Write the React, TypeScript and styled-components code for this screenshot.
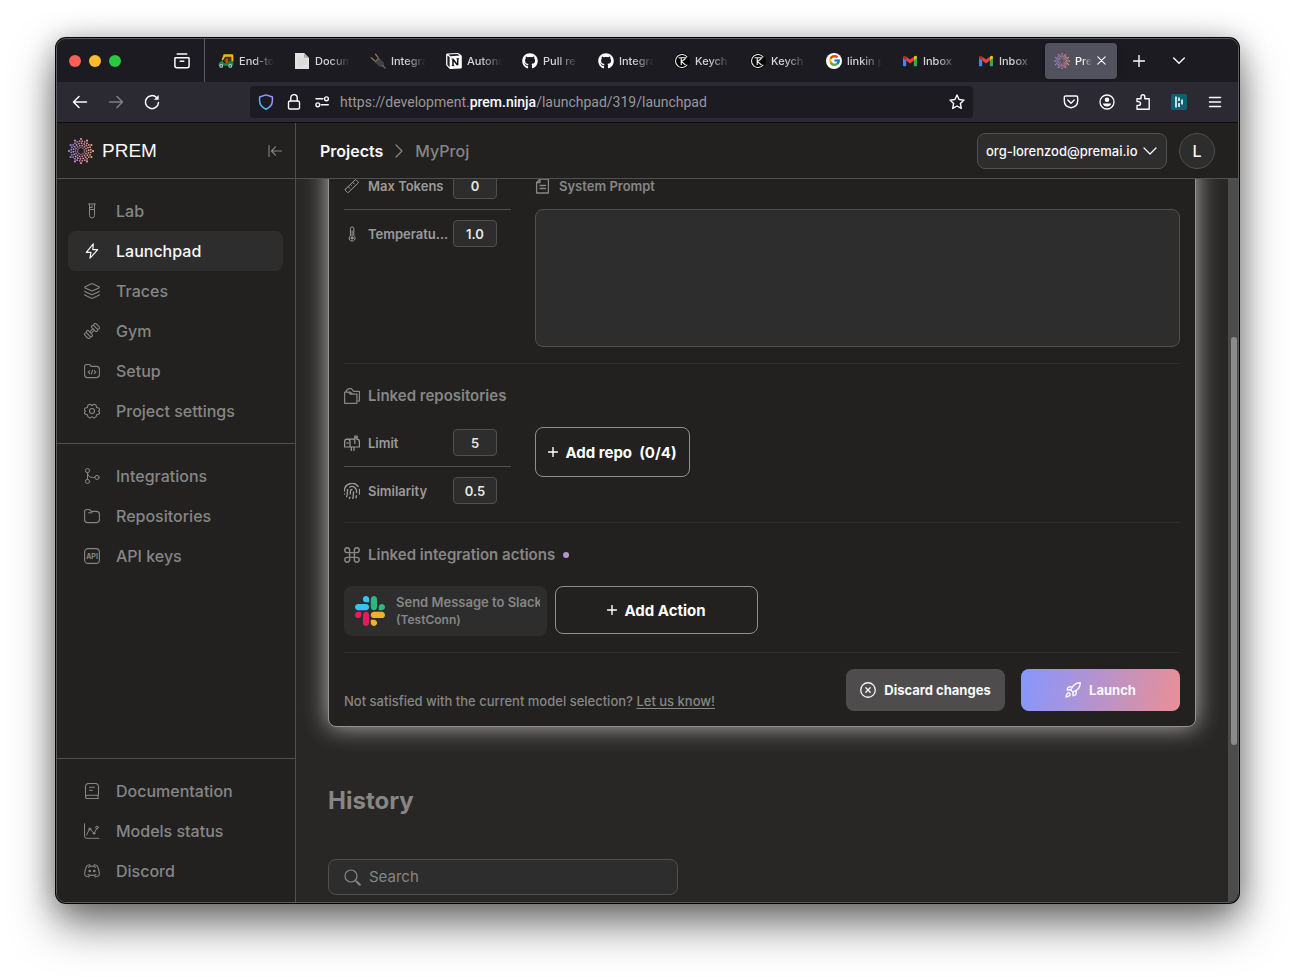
import React from "react";
import styled, { createGlobalStyle } from "styled-components";
import { Layers, Fingerprint, Command, CircleX, Rocket } from "lucide-react";
import { FcGoogle } from "react-icons/fc";
import { FaGithub } from "react-icons/fa";

const c = {
  panel: "#22211f",
  canvas: "#282725",
  field: "#2d2d2d",
  line: "#505050",
  faint: "#2f2e2c",
  muted: "#868686",
  soft: "#9a9a9a",
  white: "#f8f8f8",
};

const GlobalStyle = createGlobalStyle`
  *, *::before, *::after { box-sizing: border-box; }
  body { margin: 0; background: #fff; font-family: Inter, "Liberation Sans", sans-serif; color: ${c.muted}; }
  button, input, select, textarea { font: inherit; color: inherit; margin: 0; }
  button { cursor: pointer; border: 0; background: none; padding: 0; }
  h2, p { margin: 0; }
  svg { display: block; flex: none; }
`;

/* ---------- window ---------- */

const Desktop = styled.div`
  height: 100vh;
  min-height: 700px;
  padding: 38px 56px 74px;
  display: flex;
  overflow: hidden;
`;

const Window = styled.div`
  flex: 1;
  min-width: 0;
  display: flex;
  flex-direction: column;
  border: 1px solid #5c5c5e;
  border-radius: 10px;
  overflow: hidden;
  background: ${c.panel};
  box-shadow: 0 0 0 1px #050505, 0 22px 44px rgba(0, 0, 0, 0.52), 0 2px 28px rgba(0, 0, 0, 0.28);
`;

const TabBar = styled.div`
  flex: none;
  height: 43px;
  display: flex;
  align-items: center;
  background: #1c1b22;
  color: #fbfbfe;
`;

const Lights = styled.div`
  display: flex;
  gap: 8px;
  padding-left: 12px;
  width: 107px;
`;

const Light = styled.button<{ $color: string }>`
  width: 12px;
  height: 12px;
  border-radius: 50%;
  background: ${(p) => p.$color};
`;

const ChromeButton = styled.button<{ $dim?: boolean }>`
  width: 36px;
  height: 36px;
  flex: none;
  display: grid;
  place-items: center;
  opacity: ${(p) => (p.$dim ? 0.4 : 1)};
`;

const TabDivider = styled.span`
  align-self: stretch;
  width: 1px;
  margin-left: 4px;
  background: #5b5a62;
`;

const Tabs = styled.div`
  display: flex;
  gap: 4px;
  padding: 0 4px;
`;

const TabTools = styled.div`
  display: flex;
  gap: 4px;
`;

const Tab = styled.button<{ $active?: boolean }>`
  width: 72px;
  height: 36px;
  display: flex;
  align-items: center;
  gap: 5px;
  padding: 0 ${(p) => (p.$active ? 11 : 7)}px 0 9px;
  border-radius: 4px;
  background: ${(p) => (p.$active ? "#52525e" : "transparent")};
  box-shadow: ${(p) => (p.$active ? "0 0 4px rgba(0, 0, 0, 0.4)" : "none")};
  font-size: 11px;
  line-height: 16px;
  font-weight: 500;
  color: ${(p) => (p.$active ? "#fbfbfe" : "#d6d5da")};
`;

const TabTitle = styled.span`
  flex: 1;
  min-width: 0;
  overflow: hidden;
  white-space: nowrap;
  text-align: left;
  mask-image: linear-gradient(to right, #000 40%, transparent);
`;

const Toolbar = styled.div`
  flex: none;
  height: 41px;
  display: flex;
  align-items: center;
  padding: 0 5px;
  background: #2b2a33;
  border-bottom: 1px solid #0c0c0d;
  color: #fbfbfe;
`;

const Spring = styled.span`
  flex: 0 1 80px;
`;

const AddressBar = styled.div`
  flex: 1 0 0;
  min-width: 0;
  height: 32px;
  display: flex;
  align-items: center;
  gap: 12px;
  padding: 0 8px;
  border-radius: 4px;
  background: #1c1b22;
`;

const Url = styled.span`
  flex: 1;
  min-width: 0;
  overflow: hidden;
  white-space: nowrap;
  margin-left: -2px;
  font-family: Roboto, "Liberation Sans", sans-serif;
  font-size: 14px;
  line-height: 20px;
  color: #98979d;
  b { font-weight: 500; color: #fbfbfe; }
`;

/* ---------- app shell ---------- */

const AppBody = styled.div`
  flex: 1;
  min-height: 0;
  display: flex;
`;

const Sidebar = styled.aside`
  flex: none;
  width: 239px;
  display: flex;
  flex-direction: column;
  border-right: 1px solid ${c.line};
  background: ${c.panel};
`;

const Brand = styled.div`
  height: 56px;
  display: flex;
  align-items: center;
  gap: 8px;
  padding: 0 12px 0 11px;
  border-bottom: 1px solid ${c.line};
`;

const BrandName = styled.span`
  flex: 1;
  font-family: "Liberation Sans", Arial, sans-serif;
  font-size: 19px;
  line-height: 24px;
  color: ${c.white};
`;

const Nav = styled.nav<{ $bottom?: boolean }>`
  padding: 12px 12px ${(p) => (p.$bottom ? 11 : 12)}px 11px;
  & + & { border-top: 1px solid ${c.line}; }
  margin-top: ${(p) => (p.$bottom ? "auto" : "0")};
`;

const NavLink = styled.a<{ $active?: boolean }>`
  height: 40px;
  display: flex;
  align-items: center;
  gap: 16px;
  padding: 0 16px;
  border-radius: 8px;
  font-size: 16px;
  line-height: 24px;
  font-weight: 500;
  text-decoration: none;
  color: ${(p) => (p.$active ? c.white : c.muted)};
  background: ${(p) => (p.$active ? c.field : "transparent")};
`;

const Main = styled.main`
  flex: 1;
  min-width: 0;
  display: flex;
  flex-direction: column;
  background: ${c.canvas};
`;

const TopBar = styled.header`
  flex: none;
  height: 56px;
  display: flex;
  align-items: center;
  gap: 12px;
  padding: 0 23px 0 24px;
  border-bottom: 1px solid ${c.line};
  background: ${c.panel};
`;

const Crumbs = styled.div`
  flex: 1;
  display: flex;
  align-items: center;
  gap: 9px;
  font-size: 16px;
  line-height: 24px;
  font-weight: 500;
  a { color: ${c.white}; text-decoration: none; font-weight: 600; }
`;

const OrgPicker = styled.label`
  width: 190px;
  height: 36px;
  display: flex;
  align-items: center;
  padding: 0 9px 0 8px;
  border: 1px solid ${c.line};
  border-radius: 8px;
  background: ${c.field};
  color: ${c.white};
`;

const OrgSelect = styled.select`
  flex: 1;
  min-width: 0;
  appearance: none;
  border: 0;
  padding: 0;
  background: none;
  font-size: 13px;
  line-height: 20px;
  font-weight: 500;
`;

const Avatar = styled.button`
  width: 36px;
  height: 36px;
  border: 1px solid ${c.line};
  border-radius: 50%;
  background: ${c.field};
  color: ${c.white};
  font-size: 16px;
  font-weight: 500;
`;

const Viewport = styled.div`
  flex: 1;
  min-height: 0;
  display: flex;
  overflow: hidden;
`;

const Page = styled.div`
  flex: 1;
  min-width: 0;
  padding: 0 32px;
`;

const ScrollTrack = styled.div`
  flex: none;
  width: 10px;
  padding: 158px 1px 0 3px;
  background: #4c4c4c;
`;

const ScrollThumb = styled.div`
  height: 408px;
  border-radius: 3px;
  background: #8b8b8b;
`;

/* ---------- launch card ---------- */

const Card = styled.form`
  margin-top: -33px;
  padding: 15px;
  border: 1px solid #939393;
  border-radius: 8px;
  background: ${c.panel};
  box-shadow: 0 0 24px rgba(255, 255, 255, 0.65);
`;

const Section = styled.section<{ $end: number }>`
  padding-bottom: ${(p) => p.$end}px;
  border-bottom: 1px solid ${c.faint};
`;

const SectionTitle = styled.h2<{ $gap: number }>`
  display: flex;
  align-items: center;
  gap: 8px;
  padding: 20px 0 ${(p) => p.$gap}px;
  font-size: 15px;
  line-height: 24px;
  font-weight: 600;
`;

const Columns = styled.div`
  display: grid;
  grid-template-columns: 167px minmax(0, 1fr);
  column-gap: 24px;
  align-items: start;
`;

const ParamRow = styled.label`
  display: flex;
  align-items: center;
  gap: 4px;
  padding: 10px 14px 10px 0;
  font-size: 13px;
  line-height: 20px;
  font-weight: 600;
  color: ${c.soft};
  & + & { border-top: 1px solid ${c.line}; }
`;

const ParamName = styled.span`
  flex: 1;
  min-width: 0;
  padding-left: 4px;
  white-space: nowrap;
`;

const ParamInput = styled.input`
  width: 44px;
  height: 27px;
  padding: 0;
  border: 1px solid ${c.line};
  border-radius: 4px;
  background: ${c.field};
  color: #e6e6e6;
  text-align: center;
  font-size: 13px;
  font-weight: 600;
`;

const PromptLabel = styled.label`
  height: 47px;
  display: flex;
  align-items: center;
  gap: 8px;
  font-size: 13px;
  font-weight: 600;
`;

const PromptArea = styled.textarea`
  display: block;
  width: 100%;
  height: 138px;
  resize: none;
  border: 1px solid ${c.line};
  border-radius: 8px;
  background: ${c.field};
`;

const OutlineButton = styled.button<{ $wide?: boolean }>`
  display: flex;
  align-items: center;
  justify-content: center;
  gap: 7px;
  width: ${(p) => (p.$wide ? 203 : 155)}px;
  height: ${(p) => (p.$wide ? 48 : 50)}px;
  margin-top: ${(p) => (p.$wide ? 0 : 8)}px;
  border: 1px solid #8f8f8f;
  border-radius: 8px;
  color: #fff;
  font-size: 15px;
  font-weight: 700;
  white-space: pre;
`;

const Actions = styled.div`
  display: flex;
  gap: 8px;
`;

const ActionCard = styled.div`
  width: 203px;
  height: 50px;
  display: flex;
  align-items: center;
  gap: 11px;
  padding: 0 7px 0 11px;
  border-radius: 8px;
  background: ${c.field};
`;

const ActionText = styled.div`
  min-width: 0;
  overflow: hidden;
  white-space: nowrap;
  font-size: 13px;
  line-height: 18px;
  font-weight: 600;
  small { display: block; font-size: 12px; }
`;

const Dot = styled.span`
  width: 6px;
  height: 6px;
  border-radius: 50%;
  background: linear-gradient(to right, #8795ff, #e88fa0);
`;

const CardFooter = styled.div`
  display: flex;
  align-items: flex-end;
  gap: 16px;
  padding-top: 16px;
`;

const Note = styled.p`
  flex: 1;
  font-size: 13px;
  line-height: 20px;
  font-weight: 500;
  a { color: inherit; text-underline-offset: 2px; }
`;

const FooterButton = styled.button<{ $primary?: boolean }>`
  width: 159px;
  height: 42px;
  display: flex;
  align-items: center;
  justify-content: center;
  gap: 8px;
  border-radius: 8px;
  background: ${(p) => (p.$primary ? "linear-gradient(100deg, #8696ff, #ea8f96)" : "#4e4c4d")};
  color: ${c.white};
  font-size: 13px;
  font-weight: 700;
`;

const HistoryTitle = styled.h2`
  margin: 58px 0 42px;
  font-size: 24px;
  line-height: 32px;
  font-weight: 700;
`;

const SearchBox = styled.label`
  width: 350px;
  height: 36px;
  display: flex;
  align-items: center;
  gap: 8px;
  padding: 0 15px;
  border: 1px solid ${c.line};
  border-radius: 8px;
  background: ${c.field};
`;

const SearchInput = styled.input`
  flex: 1;
  min-width: 0;
  border: 0;
  padding: 0;
  background: none;
  font-size: 15px;
  line-height: 20px;
  &::placeholder { color: ${c.muted}; opacity: 1; }
`;

/* ---------- drawings ---------- */

type IconProps = { size?: number; box?: number; w?: number; children: React.ReactNode };

const Icon = ({ size = 16, box = 16, w = 1, children }: IconProps) => (
  <svg
    width={size}
    height={size}
    viewBox={`0 0 ${box} ${box}`}
    fill="none"
    stroke="currentColor"
    strokeWidth={w}
    strokeLinecap="round"
    strokeLinejoin="round"
    aria-hidden
  >
    {children}
  </svg>
);

const mix = (t: number) => {
  const stops = [[136, 140, 235], [214, 130, 170], [246, 165, 130]];
  const k = t < 0.5 ? 0 : 1;
  const f = t < 0.5 ? t * 2 : t * 2 - 1;
  return `rgb(${stops[k].map((v, i) => Math.round(v + (stops[k + 1][i] - v) * f)).join(",")})`;
};

const PremMark = ({ size }: { size: number }) => {
  const rings = [
    { r: 3.4, n: 10, d: 0.7, turn: 0 },
    { r: 5.5, n: 14, d: 0.85, turn: 0.5 },
    { r: 7.7, n: 18, d: 0.95, turn: 0.2 },
    { r: 9.9, n: 24, d: 0.9, turn: 0.5 },
    { r: 12, n: 12, d: 1.1, turn: 0 },
  ];
  return (
    <svg width={size} height={size} viewBox="0 0 26 26" aria-hidden>
      {rings.map((ring, ri) =>
        Array.from({ length: ring.n }, (_, i) => {
          const a = ((i + ring.turn) / ring.n) * Math.PI * 2 - Math.PI / 2;
          const x = 13 + ring.r * Math.cos(a);
          const y = 13 + ring.r * Math.sin(a);
          return <circle key={`${ri}-${i}`} cx={x} cy={y} r={ring.d} fill={mix(x / 26)} />;
        })
      )}
    </svg>
  );
};

const Rickshaw = () => (
  <svg width="16" height="16" viewBox="0 0 17 16" aria-hidden>
    <path d="M6 .8h9q1.300 0 1.300 1.300V8.500H14V4H7.500L5.200 7.500 3.800 7z" fill="#f2b90f" />
    <path d="M7.500 3.500H14V9H6.800L6 7z" fill="#4a2f1c" />
    <path d="M4.500 7.500 1 10 .5 13H16.300V8.500H11V10.500H6.500z" fill="#119048" />
    <path d="M8 5.500h2.600v5H8z" fill="#b8561e" />
    <circle cx="3.400" cy="13.200" r="2" fill="#c9cdd1" />
    <circle cx="13" cy="13.200" r="2" fill="#c9cdd1" />
    <circle cx="3.400" cy="13.200" r=".9" fill="#333" />
    <circle cx="13" cy="13.200" r=".9" fill="#333" />
  </svg>
);

const PageFavicon = () => (
  <svg width="16" height="16" viewBox="0 0 16 16" aria-hidden>
    <path d="M1 0h9l5 5v11H1z" fill="#e2e2e2" />
    <path d="M10 0v5h5z" fill="#b4b4b4" />
    <path d="M3.500 7h9M3.500 9h9M3.500 11h9M3.500 13h6M3.500 5h5" stroke="#cfcfcf" strokeWidth=".7" />
  </svg>
);

const PlugFavicon = () => (
  <svg width="16" height="16" viewBox="0 0 16 16" aria-hidden>
    <path d="M.8 4.400 5 8M5.200.8 8.500 5" stroke="#a8823a" strokeWidth="1.200" />
    <path d="M4 8.500 8.500 4.200 14 9.500q.5 3-1 4-2 1-4-.3z" fill="#414145" />
    <path d="m5 9 4-4M12 12l3.500 3.500" stroke="#66666b" strokeWidth="1.200" />
  </svg>
);

const NotionFavicon = () => (
  <svg width="16" height="16" viewBox="0 0 16 16" aria-hidden>
    <path d="M1.500.5 11.500 0Q12.300 0 13 .6l2.300 1.600q.5.400.5 1.200v11q0 .9-1 1l-10.300.6q-.9 0-1.400-.7L.5 12.500q-.4-.5-.4-1.200V1.800Q.1.600 1.500.5z" fill="#fff" />
    <path d="M1.400 2.400 3.600 4v10.300L1.400 11.700zM2.300 1.500 11.500 1l2.200 1.600L4.700 3.200z" fill="#1c1b22" />
    <path d="M7 6.200V12.500M7 6.200l4.600 6M11.700 5.800v6.500" stroke="#111" strokeWidth="1.500" fill="none" />
    <path d="M5.500 6h2M5.700 12.600h2.600M10.500 5.700h2.600" stroke="#111" strokeWidth=".9" fill="none" />
  </svg>
);

const KeychainFavicon = () => (
  <svg width="16" height="16" viewBox="0 0 16 16" aria-hidden>
    <circle cx="8" cy="8" r="7.900" fill="#060606" />
    <path d="M13.300 4.200A6.500 6.500 0 1 0 13.300 11.800" stroke="#eee" strokeWidth="1.100" fill="none" />
    <path d="M4.500 4.800h8M7.200 4.800V12M11.500 5.500 7.500 8.600 11.500 12" stroke="#eee" strokeWidth="1.100" fill="none" />
  </svg>
);

const GoogleBadge = styled.span`
  width: 16px;
  height: 16px;
  flex: none;
  display: grid;
  place-items: center;
  border-radius: 50%;
  background: #fff;
`;

const GmailFavicon = () => (
  <svg width="16" height="16" viewBox="0 0 16 16" aria-hidden>
    <path d="M1 4v8.500q0 .8.900.8H4.200V6.500z" fill="#4285f4" />
    <path d="M15 4v8.500q0 .8-.9.800H11.800V6.500z" fill="#34a853" />
    <path d="M11.800 3.700 13 2.900q2-.8 2 1.300v.9l-3.200 2.500z" fill="#fbbc04" />
    <path d="M4.200 3.700 3 2.900Q1 2.100 1 4.200v.9l3.200 2.500z" fill="#c5221f" />
    <path d="M4.200 3.700 8 6.600l3.800-2.900v3.900L8 10.500 4.200 7.600z" fill="#ea4335" />
  </svg>
);

const SlackLogo = () => (
  <svg width="30" height="30" viewBox="0 0 122.800 122.800" aria-hidden>
    <path d="M25.800 77.600c0 7.100-5.800 12.900-12.900 12.900S0 84.700 0 77.600s5.800-12.900 12.900-12.900h12.900v12.900zm6.500 0c0-7.100 5.800-12.900 12.900-12.900s12.900 5.800 12.900 12.900v32.300c0 7.100-5.800 12.900-12.900 12.900s-12.900-5.800-12.900-12.900V77.600z" fill="#E01E5A" />
    <path d="M45.200 25.800c-7.100 0-12.900-5.800-12.900-12.900S38.100 0 45.200 0s12.900 5.800 12.900 12.900v12.900H45.200zm0 6.500c7.100 0 12.900 5.800 12.900 12.900s-5.800 12.900-12.900 12.900H12.900C5.800 58.100 0 52.300 0 45.200s5.800-12.900 12.900-12.900h32.300z" fill="#36C5F0" />
    <path d="M97 45.200c0-7.100 5.800-12.900 12.900-12.900s12.900 5.800 12.900 12.900-5.800 12.900-12.900 12.900H97V45.200zm-6.500 0c0 7.100-5.800 12.900-12.900 12.900s-12.900-5.800-12.900-12.900V12.900C64.700 5.800 70.500 0 77.600 0s12.900 5.800 12.900 12.900v32.300z" fill="#2EB67D" />
    <path d="M77.600 97c7.100 0 12.900 5.800 12.900 12.900s-5.800 12.900-12.900 12.900-12.900-5.800-12.900-12.900V97h12.900zm0-6.500c-7.100 0-12.900-5.800-12.900-12.900s5.800-12.900 12.900-12.900h32.300c7.100 0 12.900 5.800 12.900 12.900s-5.800 12.900-12.900 12.900H77.600z" fill="#ECB22E" />
  </svg>
);

const TubeIcon = () => (
  <Icon>
    <path d="M4.500 1h7M5.500 1v11.500a2.500 2.500 0 0 0 5 0V1M5.500 6.500h5M8 2.500v2M5.500 4.500H8" />
  </Icon>
);

const BoltIcon = () => (
  <Icon w={1.2}>
    <path d="M9.300.9 2.300 9.300h4.600L6 15.200l7.700-8.500H8.800z" />
  </Icon>
);

const BarbellIcon = () => (
  <Icon w={1.1}>
    <path d="m5.900 8.700 2.800-2.800M7.300 10.100l2.800-2.800" />
    <path d="M2.700 7.900q1.100-1 2 0l3.400 3.400q1 .9 0 2-1 .9-2 0L2.700 9.900q-.9-1 0-2z" />
    <path d="M2.400 9.800q-1.900-.2-1.900 1.500 0 .9 1 1.600l1.600 1.600q.7 1 1.600 1 1.700 0 1.500-1.900" />
    <path d="M7.900 2.700q-1 1 0 2l3.400 3.400q1 .9 2 0 .9-1 0-2L9.900 2.700q-1-.9-2 0z" />
    <path d="M9.800 2.400Q9.600.5 11.300.5q.9 0 1.600 1l1.600 1.600q1 .7 1 1.600 0 1.700-1.900 1.500" />
  </Icon>
);

const FolderPath = () => (
  <path d="M.6 11.800V3.600Q.6 1.500 2.700 1.500h2.200q1 0 1.600.9l.7 1h5.200q3 0 3 3v5.200q0 3-3 3H3.600q-3 0-3-2.800z" />
);

const FolderIcon = () => (
  <Icon w={1.1}>
    <FolderPath />
    <path d="M4.500 4.800h3.500" />
  </Icon>
);

const FolderCodeIcon = () => (
  <Icon w={1.1}>
    <FolderPath />
    <path d="M5.700 7.600 4.200 9.100l1.500 1.500M10.300 7.600l1.500 1.500-1.500 1.500M8.600 7.200l-1.200 3.800" />
  </Icon>
);

const GearIcon = () => (
  <Icon w={1.1}>
    <circle cx="8" cy="8" r="2.500" />
    <path d="M5.800 1.200q1 .1 1.300.8.900.8 1.800 0 .3-.7 1.300-.8 1.800.5 2.200 1.800-.2 1.800 1.400 1.800 1.400.2 1.700 1.200.3 1-.5 1.500-1 .6 0 1.200.8.500.5 1.500-.3 1-1.700 1.200-1.600 0-1.400 1.800-.4 1.300-2.200 1.800-1-.1-1.300-.8-.9-.8-1.800 0-.3.700-1.300.8-1.800-.5-2.200-1.800.2-1.800-1.400-1.800Q.8 11.200.5 10.200.2 9.200 1 8.700q1-.6 0-1.200Q.2 7 .5 6 .8 5 2.200 4.800 3.800 4.800 3.600 3 4 1.700 5.800 1.200z" />
  </Icon>
);

const BranchIcon = () => (
  <Icon>
    <circle cx="3.500" cy="2.600" r="2.100" />
    <circle cx="3.500" cy="13.400" r="2.100" />
    <circle cx="13" cy="9.400" r="2.100" />
    <path d="M3.500 4.700v6.600M3.500 5q.5 4.400 5 4.400h2.400" />
  </Icon>
);

const ApiIcon = () => (
  <Icon w={1.1}>
    <rect x=".6" y=".6" width="14.800" height="14.800" rx="3.500" />
    <text x="8" y="10.500" textAnchor="middle" fontSize="7" fontWeight="700" fill="currentColor" stroke="none">API</text>
  </Icon>
);

const BookIcon = () => (
  <Icon w={1.1}>
    <path d="M1.500 13.500V3.500a3 3 0 0 1 3-3h7a3 3 0 0 1 3 3v8.800H3.500a2 1.600 0 0 0 0 3.200h11M14 12.300v3.200M5.500 4.200h5M5.500 7.200h3" />
  </Icon>
);

const StatusIcon = () => (
  <Icon>
    <path d="M.5.800v12.500a2 2 0 0 0 2 2h12.500M2.500 12l3.300-6.500 4.200 5 2.900-5.200" />
    <circle cx="5.800" cy="6" r="1" />
    <circle cx="10" cy="10.300" r="1" />
    <circle cx="13" cy="4.500" r="1.300" />
  </Icon>
);

const DiscordIcon = () => (
  <Icon w={1.1}>
    <path d="M5.500 12.200 4.600 14Q2 13.600.8 12 .3 6.500 3 2.700 4.200 1.900 5.600 1.700l.8 1.500h3.200l.8-1.500q1.400.2 2.600 1Q15.700 6.500 15.200 12 14 13.600 11.400 14l-.9-1.800M4 11.500q4 1.800 8 0M4.500 4.200 6.400 3.200M11.500 4.200 9.600 3.200" />
    <circle cx="5.700" cy="8" r=".8" fill="currentColor" />
    <circle cx="10.300" cy="8" r=".8" fill="currentColor" />
  </Icon>
);

const RulerIcon = () => (
  <Icon>
    <path d="m1.300 11.300 9.900-9.400q.5-.5 1 0l2 2.100q.5.500 0 1l-9.900 9.400q-.5.500-1 0l-2-2.100q-.5-.5 0-1zM4.300 8.600l1.400 1.500M6.500 6.500 7.400 7.500M8.700 4.400l1.400 1.500" />
  </Icon>
);

const ThermometerIcon = () => (
  <Icon>
    <path d="M6.400 9.600V2.700a1.700 1.700 0 0 1 3.400 0v6.900a3 3 0 1 1-3.400 0z" />
    <path d="M8.100 5v5" />
    <circle cx="8.100" cy="12" r="1.100" fill="currentColor" />
  </Icon>
);

const PageIcon = () => (
  <Icon w={1.3}>
    <path d="M5 1h8.400v14H1.600V4.500zM5 1v3.500H1.600M5 7.500h5.500M5 10.500h5.500" />
  </Icon>
);

const FoldersIcon = () => (
  <Icon w={1.2}>
    <path d="M.6 15.300V4.200h3.600l1.900 2h6.800v9.100zM2.400 4.200V2.500L4.500.7h3l2.100 2.600h5.800v9.700h-2.500M4.500 4.200h2l2.200 2" />
  </Icon>
);

const MailboxIcon = () => (
  <Icon w={1.2}>
    <path d="M6 12H.6V6.900a2.700 2.700 0 0 1 5.400 0V12h9.400V6.900q0-2.700-2.600-2.700M3.400 4.200h6.300M10.800 8.500V1h2.400v1.800h-2.400M7.300 12.300V15.600M10 12.300V15.600M2.500 8h2" />
  </Icon>
);

const SearchIcon = () => (
  <Icon size={17} box={17} w={1.2}>
    <circle cx="7" cy="7" r="6" />
    <path d="m11.600 11.600.8.800" />
    <path d="m12.800 12.800 3 3" strokeWidth="2" />
  </Icon>
);

const PlusIcon = () => (
  <Icon size={10} box={10} w={1.4}>
    <path d="M5 .5v9M.5 5h9" />
  </Icon>
);

/* ---------- data ---------- */

const tabs: { icon: React.ReactNode; title: string }[] = [
  { icon: <Rickshaw />, title: "End-to" },
  { icon: <PageFavicon />, title: "Docum" },
  { icon: <PlugFavicon />, title: "Integra" },
  { icon: <NotionFavicon />, title: "Autono" },
  { icon: <FaGithub size={16} color="#fff" />, title: "Pull re" },
  { icon: <FaGithub size={16} color="#fff" />, title: "Integra" },
  { icon: <KeychainFavicon />, title: "Keych" },
  { icon: <KeychainFavicon />, title: "Keych" },
  { icon: <GoogleBadge><FcGoogle size={13} /></GoogleBadge>, title: "linkin p" },
  { icon: <GmailFavicon />, title: "Inbox" },
  { icon: <GmailFavicon />, title: "Inbox" },
];

const projectNav = [
  { icon: <TubeIcon />, label: "Lab" },
  { icon: <BoltIcon />, label: "Launchpad", active: true },
  { icon: <Layers size={16} strokeWidth={1.5} viewBox="1 1 22 22" />, label: "Traces" },
  { icon: <BarbellIcon />, label: "Gym" },
  { icon: <FolderCodeIcon />, label: "Setup" },
  { icon: <GearIcon />, label: "Project settings" },
];

const orgNav = [
  { icon: <BranchIcon />, label: "Integrations" },
  { icon: <FolderIcon />, label: "Repositories" },
  { icon: <ApiIcon />, label: "API keys" },
];

const helpNav = [
  { icon: <BookIcon />, label: "Documentation" },
  { icon: <StatusIcon />, label: "Models status" },
  { icon: <DiscordIcon />, label: "Discord" },
];

type NavItem = { icon: React.ReactNode; label: string; active?: boolean };

const NavList = ({ items, bottom }: { items: NavItem[]; bottom?: boolean }) => (
  <Nav $bottom={bottom}>
    {items.map((item) => (
      <NavLink key={item.label} href="#" $active={item.active}>
        {item.icon}
        {item.label}
      </NavLink>
    ))}
  </Nav>
);

const Param = ({ icon, name, value }: { icon: React.ReactNode; name: string; value: string }) => (
  <ParamRow>
    {icon}
    <ParamName>{name}</ParamName>
    <ParamInput defaultValue={value} />
  </ParamRow>
);

const BrowserChrome = () => (
  <>
    <TabBar>
      <Lights>
        <Light $color="#ff5f57" aria-label="Close" />
        <Light $color="#febc2e" aria-label="Minimise" />
        <Light $color="#28c840" aria-label="Zoom" />
      </Lights>
      <ChromeButton aria-label="Recent tabs">
        <Icon w={1.5}>
          <path d="M3.200 1h9.600M1.600 4.800h12.800q.7 0 .7.700v7.300q0 2-2 2H2.900q-2 0-2-2V5.500q0-.7.700-.7zM6.200 8.300h3.600" />
        </Icon>
      </ChromeButton>
      <TabDivider />
      <Tabs>
        {tabs.map((t, i) => (
          <Tab key={i}>
            {t.icon}
            <TabTitle>{t.title}</TabTitle>
          </Tab>
        ))}
        <Tab $active>
          <PremMark size={16} />
          <TabTitle>Prem</TabTitle>
          <Icon size={9} box={9} w={1.1}><path d="m.8.800 7.400 7.400M8.200.800.800 8.200" /></Icon>
        </Tab>
      </Tabs>
      <TabTools>
        <ChromeButton aria-label="New tab">
          <Icon size={12} box={12} w={1.4}><path d="M6 .5v11M.5 6h11" /></Icon>
        </ChromeButton>
        <ChromeButton aria-label="List all tabs">
          <Icon size={12} box={12} w={1.4}><path d="m.7 3 5.300 5.300L11.300 3" /></Icon>
        </ChromeButton>
      </TabTools>
    </TabBar>
    <Toolbar>
      <ChromeButton aria-label="Back">
        <Icon w={1.5}><path d="M14.500 8H1.500M7 2.500 1.500 8 7 13.500" /></Icon>
      </ChromeButton>
      <ChromeButton aria-label="Forward" $dim>
        <Icon w={1.5}><path d="M1.500 8h13M9 2.500 14.500 8 9 13.500" /></Icon>
      </ChromeButton>
      <ChromeButton aria-label="Reload">
        <Icon w={1.5}>
          <path d="M14.500 8.500A6.500 6.500 0 1 1 12.600 3.500" />
          <path d="M14.700 1v4.800H9.900z" fill="currentColor" stroke="none" />
        </Icon>
      </ChromeButton>
      <Spring />
      <AddressBar>
        <svg width="16" height="16" viewBox="0 0 16 16" fill="none" aria-hidden>
          <defs>
            <linearGradient id="shield" x1="0" y1="1" x2="1" y2="0">
              <stop offset="0" stopColor="#30c5f0" />
              <stop offset=".5" stopColor="#6fa9f7" />
              <stop offset="1" stopColor="#b38bfa" />
            </linearGradient>
          </defs>
          <path d="M8 .9 14.400 3v3.500q0 6-6.400 8.700Q1.600 12.500 1.600 6.500V3z" stroke="url(#shield)" strokeWidth="1.500" strokeLinejoin="round" />
        </svg>
        <Icon w={1.4}>
          <rect x="2.500" y="7" width="11" height="8" rx="1.500" />
          <path d="M4.800 7V3.800a3.200 3.200 0 0 1 6.400 0V7" />
        </Icon>
        <Icon w={1.4}>
          <circle cx="12.500" cy="4.800" r="1.900" />
          <circle cx="3.800" cy="10.800" r="1.900" />
          <path d="M2 4.800h7M7.300 10.800h7" />
        </Icon>
        <Url>https://development.<b>prem.ninja</b>/launchpad/319/launchpad</Url>
        <Icon w={1.4}>
          <path d="m8 1 2.100 4.500 4.900.6-3.600 3.400.9 4.900L8 12l-4.300 2.400.9-4.900L1 6.100l4.900-.6z" />
        </Icon>
      </AddressBar>
      <Spring />
      <ChromeButton aria-label="Save to Pocket">
        <Icon w={1.4}><path d="M2.700 2h10.600q1.400 0 1.400 1.400v3.400q0 6.200-6.700 6.900-6.700-.7-6.700-6.900V3.400Q1.300 2 2.700 2zM4.800 6 8 9.200 11.200 6" /></Icon>
      </ChromeButton>
      <ChromeButton aria-label="Account">
        <Icon w={1.3}>
          <circle cx="8" cy="8" r="7" />
          <circle cx="8" cy="5.800" r="2.300" fill="currentColor" stroke="none" />
          <path d="M3.800 9.600h8.400q-.8 3-4.200 3t-4.200-3z" fill="currentColor" stroke="none" />
        </Icon>
      </ChromeButton>
      <ChromeButton aria-label="Extensions">
        <Icon w={1.4}><path d="M2 15.200v-3.800h1.600a1.900 1.900 0 0 0 0-3.800H2V4.800h4V2.700a1.900 1.900 0 0 1 3.800 0v2.100h4.400v10.400z" /></Icon>
      </ChromeButton>
      <ChromeButton aria-label="Reader tools">
        <svg width="16" height="16" viewBox="0 0 16 16" aria-hidden>
          <rect width="16" height="16" rx="1.500" fill="#0f5f70" />
          <path d="M5 2.500v11M8 3.500v3.500M8 9v4M11 5.500v5" stroke="#e8f4f6" strokeWidth="1.700" />
        </svg>
      </ChromeButton>
      <ChromeButton aria-label="Menu">
        <Icon w={1.5}><path d="M2.500 3.500h11M2.500 8h11M2.500 12.500h11" /></Icon>
      </ChromeButton>
    </Toolbar>
  </>
);

const LaunchCard = () => (
  <Card onSubmit={(e) => e.preventDefault()}>
    <Section $end={16}>
      <Columns>
        <div>
          <Param icon={<RulerIcon />} name="Max Tokens" value="0" />
          <Param icon={<ThermometerIcon />} name="Temperatu..." value="1.0" />
        </div>
        <div>
          <PromptLabel htmlFor="system-prompt">
            <PageIcon />
            System Prompt
          </PromptLabel>
          <PromptArea id="system-prompt" />
        </div>
      </Columns>
    </Section>
    <Section $end={8}>
      <SectionTitle $gap={11}>
        <FoldersIcon />
        Linked repositories
      </SectionTitle>
      <Columns>
        <div>
          <Param icon={<MailboxIcon />} name="Limit" value="5" />
          <Param icon={<Fingerprint size={16} strokeWidth={1.8} viewBox="1.500 1.500 21 21" />} name="Similarity" value="0.5" />
        </div>
        <OutlineButton type="button">
          <PlusIcon />
          {"Add repo  (0/4)"}
        </OutlineButton>
      </Columns>
    </Section>
    <Section $end={16}>
      <SectionTitle $gap={19}>
        <Command size={16} strokeWidth={1.8} viewBox="2 2 20 20" />
        Linked integration actions
        <Dot />
      </SectionTitle>
      <Actions>
        <ActionCard>
          <SlackLogo />
          <ActionText>
            Send Message to Slack
            <small>(TestConn)</small>
          </ActionText>
        </ActionCard>
        <OutlineButton type="button" $wide>
          <PlusIcon />
          Add Action
        </OutlineButton>
      </Actions>
    </Section>
    <CardFooter>
      <Note>
        Not satisfied with the current model selection? <a href="#">Let us know!</a>
      </Note>
      <FooterButton type="button">
        <CircleX size={16} strokeWidth={1.8} viewBox="1 1 22 22" />
        Discard changes
      </FooterButton>
      <FooterButton type="submit" $primary>
        <Rocket size={16} strokeWidth={2} viewBox="1 1 22 22" />
        Launch
      </FooterButton>
    </CardFooter>
  </Card>
);

export default function App() {
  return (
    <>
      <GlobalStyle />
      <Desktop>
        <Window>
          <BrowserChrome />
          <AppBody>
            <Sidebar>
              <Brand>
                <PremMark size={26} />
                <BrandName>PREM</BrandName>
                <button aria-label="Collapse sidebar">
                  <Icon w={1.1}><path d="M2 2.500v11M14.500 8h-10M8.500 3.800 4.500 8l4 4.200" /></Icon>
                </button>
              </Brand>
              <NavList items={projectNav} />
              <NavList items={orgNav} />
              <NavList items={helpNav} bottom />
            </Sidebar>
            <Main>
              <TopBar>
                <Crumbs>
                  <a href="#">Projects</a>
                  <Icon size={14} box={14} w={1.2}><path d="M4 1 10 7 4 13" /></Icon>
                  MyProj
                </Crumbs>
                <OrgPicker>
                  <OrgSelect aria-label="Organisation">
                    <option>org-lorenzod@premai.io</option>
                  </OrgSelect>
                  <Icon size={14} box={14} w={1.3}><path d="m1 4 6 6 6-6" /></Icon>
                </OrgPicker>
                <Avatar aria-label="Account">L</Avatar>
              </TopBar>
              <Viewport>
                <Page>
                  <LaunchCard />
                  <HistoryTitle>History</HistoryTitle>
                  <SearchBox>
                    <SearchIcon />
                    <SearchInput placeholder="Search" aria-label="Search history" />
                  </SearchBox>
                </Page>
                <ScrollTrack>
                  <ScrollThumb />
                </ScrollTrack>
              </Viewport>
            </Main>
          </AppBody>
        </Window>
      </Desktop>
    </>
  );
}
